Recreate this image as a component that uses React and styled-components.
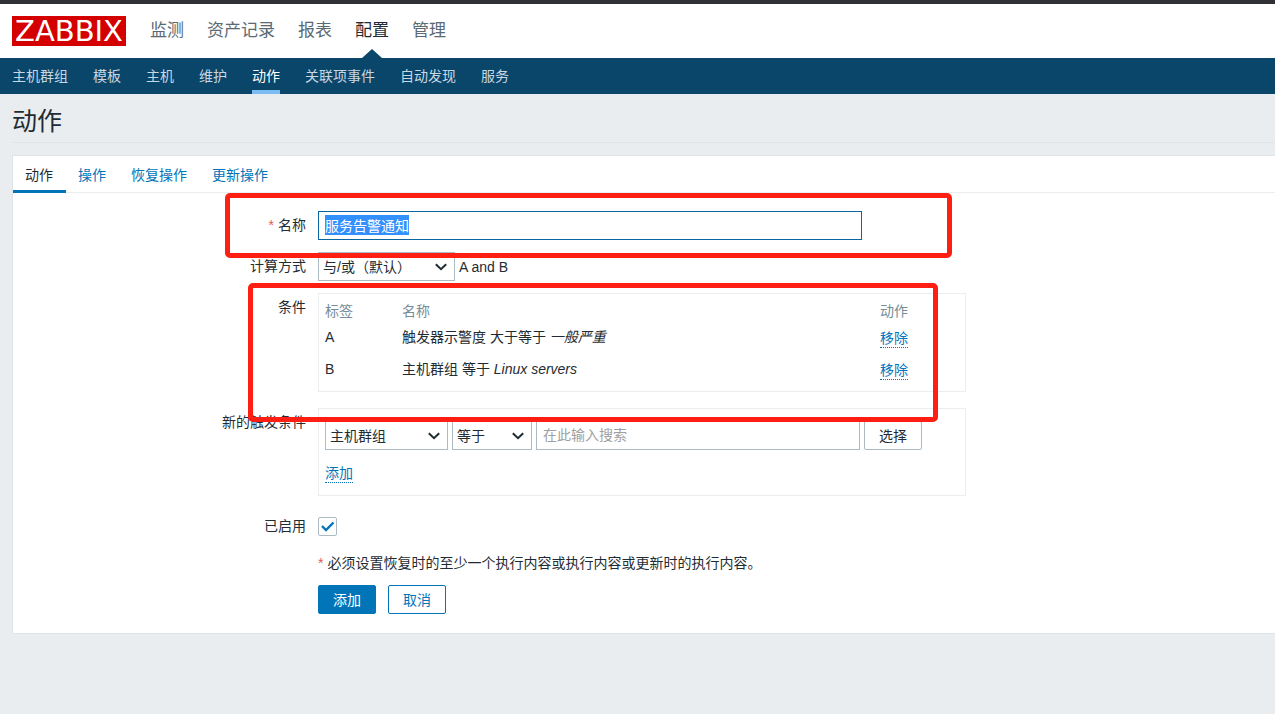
import React, { useEffect, useRef } from 'react'
import styled, { createGlobalStyle } from 'styled-components'

const sections = ['监测', '资产记录', '报表', '配置', '管理']
const pages = ['主机群组', '模板', '主机', '维护', '动作', '关联项事件', '自动发现', '服务']
const tabs = ['动作', '操作', '恢复操作', '更新操作']

const conditions = [
    { label: 'A', text: '触发器示警度 大于等于', value: '一般严重' },
    { label: 'B', text: '主机群组 等于', value: 'Linux servers' },
]

function Dropdown({ id, label, width, options }) {
    return (
        <SelectWrap $width={width}>
            <Select id={id} aria-label={label}>
                {options.map((option) => (
                    <option key={option}>{option}</option>
                ))}
            </Select>
            <Chevron viewBox="0 0 12 8">
                <path d="M0.8 1.2 L6 6.2 L11.2 1.2" />
            </Chevron>
        </SelectWrap>
    )
}

function App() {
    const nameRef = useRef(null)

    useEffect(() => {
        nameRef.current.focus()
        nameRef.current.select()
    }, [])

    return (
        <>
            <GlobalStyle />
            <Header>
                <Logo href="#">ZABBIX</Logo>
                <MainNav>
                    {sections.map((name) => (
                        <MainLink key={name} href="#" $active={name === '配置'}>{name}</MainLink>
                    ))}
                </MainNav>
            </Header>
            <SubNav>
                {pages.map((name) => (
                    <SubLink key={name} href="#" $active={name === '动作'}>{name}</SubLink>
                ))}
            </SubNav>
            <Main>
                <Title>动作</Title>
                <Panel>
                    <Tabs>
                        {tabs.map((name, index) => (
                            <Tab key={name} href="#" $active={index === 0}>{name}</Tab>
                        ))}
                    </Tabs>
                    <Form onSubmit={(e) => e.preventDefault()}>
                        <Row>
                            <Label htmlFor="name"><Required>*</Required>名称</Label>
                            <NameInput id="name" ref={nameRef} defaultValue="服务告警通知" />
                        </Row>
                        <Row>
                            <Label htmlFor="evaltype">计算方式</Label>
                            <Controls>
                                <Dropdown id="evaltype" width={137} options={['与/或（默认）']} />
                                <span>A and B</span>
                            </Controls>
                        </Row>
                        <Row>
                            <Label as="span">条件</Label>
                            <ConditionBox>
                                <Table>
                                    <thead>
                                        <tr>
                                            <Th $width={77}>标签</Th>
                                            <Th $width={478}>名称</Th>
                                            <Th>动作</Th>
                                        </tr>
                                    </thead>
                                    <tbody>
                                        {conditions.map((item) => (
                                            <tr key={item.label}>
                                                <Td>{item.label}</Td>
                                                <Td>{item.text} <em>{item.value}</em></Td>
                                                <Td><LinkButton type="button">移除</LinkButton></Td>
                                            </tr>
                                        ))}
                                    </tbody>
                                </Table>
                            </ConditionBox>
                        </Row>
                        <Row>
                            <Label as="span">新的触发条件</Label>
                            <NewConditionBox>
                                <Controls>
                                    <Dropdown label="条件类型" width={123} options={['主机群组']} />
                                    <Dropdown label="运算符" width={80} options={['等于']} />
                                    <SearchInput aria-label="主机群组" placeholder="在此输入搜索" />
                                    <Button type="button" $kind="grey">选择</Button>
                                </Controls>
                                <LinkButton type="button">添加</LinkButton>
                            </NewConditionBox>
                        </Row>
                        <Row>
                            <Label htmlFor="enabled">已启用</Label>
                            <Controls>
                                <CheckWrap>
                                    <Checkbox id="enabled" type="checkbox" defaultChecked />
                                    <CheckMark viewBox="0 0 19 19">
                                        <path d="M4 9 L8 13 L15.5 5.5" />
                                    </CheckMark>
                                </CheckWrap>
                            </Controls>
                        </Row>
                        <Row>
                            <Note><Required>*</Required>必须设置恢复时的至少一个执行内容或执行内容或更新时的执行内容。</Note>
                        </Row>
                        <Row>
                            <Actions>
                                <Button type="submit" $kind="primary">添加</Button>
                                <Button type="button">取消</Button>
                            </Actions>
                        </Row>
                        {/* red frames round the name and the conditions */}
                        <Frame $left={212} $top={0} $width={727} $height={65} />
                        <Frame $left={235} $top={90} $width={690} $height={139} />
                    </Form>
                </Panel>
            </Main>
        </>
    )
}
export default App

const GlobalStyle = createGlobalStyle`
    * {
        box-sizing: border-box;
    }
    body {
        margin: 0;
        background: #e9edf0;
        color: #1f2c33;
        font-size: 14px;
        line-height: 20px;
    }
    body, input, select, button {
        font-family: "Liberation Sans", "Noto Sans CJK SC", sans-serif;
    }
    a {
        text-decoration: none;
    }
`
const Header = styled.header`
    display: flex;
    align-items: stretch;
    gap: 24px;
    height: 58px;
    padding-left: 12px;
    border-top: 4px solid #2f3136;
    background: #fff;
`
const Logo = styled.a`
    margin: 12px 0;
    width: 114px;
    background: #d40000;
    color: #fff;
    font-family: "DejaVu Sans", sans-serif;
    font-size: 29px;
    line-height: 30px;
    text-align: center;
`
const MainNav = styled.nav`
    display: flex;
    gap: 23px;
`
const MainLink = styled.a`
    position: relative;
    color: ${(props) => (props.$active ? '#1f2c33' : '#5a6a74')};
    font-size: 17px;
    line-height: 54px;

    &::after {
        content: '';
        display: ${(props) => (props.$active ? 'block' : 'none')};
        position: absolute;
        left: 50%;
        bottom: 0;
        margin-left: -10px;
        border: 10px solid transparent;
        border-top: 0;
        border-bottom: 9px solid #0a466a;
    }
`
const SubNav = styled.nav`
    display: flex;
    gap: 25px;
    height: 36px;
    padding-left: 12px;
    background: #0a466a;
`
const SubLink = styled.a`
    border-bottom: 4px solid ${(props) => (props.$active ? '#7bbdf2' : 'transparent')};
    color: ${(props) => (props.$active ? '#fff' : '#c8d8e2')};
    line-height: 36px;
`
const Main = styled.main`
    padding-left: 12px;
`
const Title = styled.h1`
    margin: 0 0 12px;
    padding: 12px 0 6px;
    border-bottom: 1px solid #dfe4e7;
    font-size: 25px;
    font-weight: 400;
    line-height: 30px;
`
const Panel = styled.section`
    border: 1px solid #dfe4e7;
    border-right: 0;
    background: #fff;
`
const Tabs = styled.nav`
    display: flex;
    height: 37px;
    border-bottom: 1px solid #ebeef0;
`
const Tab = styled.a`
    height: 37px;
    padding: 0 13px 0 12px;
    border-bottom: 3px solid ${(props) => (props.$active ? '#0275b8' : 'transparent')};
    color: ${(props) => (props.$active ? '#1f2c33' : '#0275b8')};
    line-height: 38px;
`
const Form = styled.form`
    position: relative;
    display: flex;
    flex-direction: column;
    gap: 12px;
    padding: 18px 0 19px;
`
const Row = styled.div`
    display: grid;
    grid-template-columns: 293px 1fr;
    column-gap: 12px;
`
const Label = styled.label`
    line-height: 29px;
    text-align: right;
`
const Required = styled.span`
    margin-right: 4px;
    color: #e45959;
`
const Controls = styled.div`
    display: flex;
    align-items: center;
    gap: 4px;
    min-height: 29px;
`
const Input = styled.input`
    height: 29px;
    padding: 0 6px 1px;
    border: 1px solid #acbbc2;
    border-radius: 0;
    outline: 0;
    background: #fff;
    color: #1f2c33;
    font-size: 14px;

    &:focus {
        border-color: #0a66a0;
    }
    &::placeholder {
        color: #a0a0a0;
    }
    &::selection {
        background: #3390ff;
        color: #fff;
    }
`
const NameInput = styled(Input)`
    width: 544px;
`
const SearchInput = styled(Input)`
    width: 324px;
`
const SelectWrap = styled.span`
    position: relative;
    width: ${(props) => props.$width}px;
`
const Select = styled.select`
    display: block;
    width: 100%;
    height: 29px;
    padding: 0 4px;
    border: 1px solid #acbbc2;
    border-radius: 0;
    appearance: none;
    background: #fff;
    color: #1f2c33;
    font-size: 14px;
`
const Chevron = styled.svg`
    position: absolute;
    right: 8px;
    top: 11px;
    width: 12px;
    height: 8px;
    fill: none;
    stroke: #1f2c33;
    stroke-width: 2;
    pointer-events: none;
`
const Box = styled.div`
    width: 648px;
    margin-bottom: 4px;
    border: 1px solid #ebeef0;
`
const ConditionBox = styled(Box)`
    padding: 7px 6px 6px;
`
const NewConditionBox = styled(Box)`
    display: flex;
    flex-direction: column;
    align-items: flex-start;
    gap: 12px;
    padding: 12px 6px;
`
const Table = styled.table`
    width: 100%;
    border-collapse: collapse;
    table-layout: fixed;
`
const Th = styled.th`
    width: ${(props) => (props.$width ? props.$width + 'px' : 'auto')};
    height: 20px;
    padding: 0;
    color: #768d99;
    font-weight: 400;
    text-align: left;
`
const Td = styled.td`
    height: 32px;
    padding: 0;
`
const LinkButton = styled.button`
    display: block;
    padding: 2px 0 0;
    border: 0;
    border-bottom: 1px dotted #0275b8;
    background: none;
    color: #0275b8;
    font-size: 14px;
    line-height: 18px;
`
const Button = styled.button`
    height: 29px;
    padding: 0 14px 2px;
    border: 1px solid ${(props) => (props.$kind === 'grey' ? '#acbbc2' : '#0275b8')};
    border-radius: 2px;
    background: ${(props) => (props.$kind === 'primary' ? '#0275b8' : '#fff')};
    color: ${(props) => ({ primary: '#fff', grey: '#1f2c33' }[props.$kind] || '#0275b8')};
    font-size: 14px;
`
const CheckWrap = styled.span`
    position: relative;
    width: 19px;
    height: 19px;
`
const Checkbox = styled.input`
    display: block;
    width: 19px;
    height: 19px;
    margin: 0;
    border: 1px solid #acbbc2;
    border-radius: 2px;
    appearance: none;
    background: #fff;
`
const CheckMark = styled.svg`
    position: absolute;
    inset: 0;
    fill: none;
    stroke: #0275b8;
    stroke-width: 2.4;
    pointer-events: none;

    ${Checkbox}:not(:checked) + & {
        display: none;
    }
`
const Note = styled.div`
    grid-column: 2;
`
const Actions = styled.div`
    grid-column: 2;
    display: flex;
    gap: 12px;
`
const Frame = styled.div`
    position: absolute;
    left: ${(props) => props.$left}px;
    top: ${(props) => props.$top}px;
    width: ${(props) => props.$width}px;
    height: ${(props) => props.$height}px;
    border: 5px solid #ff1f12;
    border-radius: 5px;
    pointer-events: none;
`
